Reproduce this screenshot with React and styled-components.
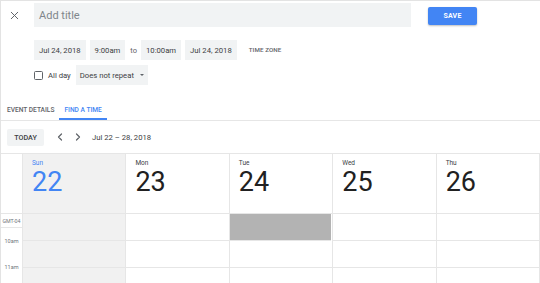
import React from 'react';
import styled, { createGlobalStyle } from 'styled-components';
import { X, ChevronLeft, ChevronRight } from 'lucide-react';

const GlobalStyle = createGlobalStyle`
  html, body {
    margin:0;
    padding:0;
    background:#ffffff;
  }
  body {
    font-family:Roboto, "Liberation Sans", sans-serif;
    color:#3c4043;
    overflow:hidden;
  }
`

const chipGray = '#f1f3f4'
const lineGray = '#e6e6e6'
const blue = '#4285f4'

const Page = styled.div`
  width:539px;
  height:282px;
  border-top:1px solid #e3e3e3;
  border-left:1px solid #e3e3e3;
  display:flex;
  flex-direction:column;
  overflow:hidden;
  & > * {
    flex-shrink:0;
  }
`

const TopBar = styled.div`
  display:flex;
  align-items:flex-start;
  padding-top:2px;
`

const CloseBox = styled.div`
  width:27px;
  height:24px;
  display:flex;
  align-items:center;
  justify-content:center;
  margin-right:6px;
  color:#5f6368;
`

const TitleInput = styled.div`
  width:370px;
  height:24px;
  background:${chipGray};
  display:flex;
  align-items:center;
  padding-left:5px;
  padding-right:2px;
  font-size:11px;
  color:#80868b;
`

const SaveButton = styled.div`
  margin-left:17px;
  margin-top:4px;
  width:49px;
  height:18px;
  background:${blue};
  border-radius:2px;
  box-shadow:0 1px 2px rgba(0,0,0,0.25);
  color:#ffffff;
  font-size:7px;
  font-weight:700;
  letter-spacing:0.2px;
  display:flex;
  align-items:center;
  justify-content:center;
`

const Row = styled.div`
  display:flex;
  align-items:center;
  height:20px;
  padding-left:33px;
  margin-top:${({ top }) => top}px;
`

const Chip = styled.div`
  height:20px;
  display:flex;
  align-items:center;
  padding:0 ${({ pad }) => pad || 5}px;
  margin-right:${({ gap }) => gap === undefined ? 4 : gap}px;
  background:${chipGray};
  font-size:7.7px;
  color:#3c4043;
  white-space:nowrap;
`

const Small = styled.span`
  font-size:${({ size }) => size || 7.5}px;
  color:${({ dark }) => dark ? '#3c4043' : '#5f6368'};
  margin:${({ margin }) => margin || '0'};
  white-space:nowrap;
`

const TimeZone = styled.span`
  margin-left:12px;
  font-size:6.2px;
  font-weight:500;
  color:#5f6368;
  letter-spacing:0.1px;
`

const Checkbox = styled.div`
  width:7px;
  height:7px;
  border:1.5px solid #5f6368;
  border-radius:1.5px;
`

const Caret = styled.span`
  margin-left:6px;
  width:0;
  height:0;
  border-left:2px solid transparent;
  border-right:2px solid transparent;
  border-top:2px solid #5f6368;
`

const TabBar = styled.div`
  display:flex;
  margin-top:15px;
  height:20px;
  padding-left:1px;
  border-bottom:1px solid ${lineGray};
`

const Tab = styled.div`
  height:20px;
  box-sizing:border-box;
  padding:0 5px;
  display:flex;
  align-items:center;
  font-size:6.6px;
  font-weight:500;
  color:${({ active }) => active ? blue : '#5f6368'};
  border-bottom:2px solid ${({ active }) => active ? blue : 'transparent'};
  padding-top:2px;
  white-space:nowrap;
`

const Toolbar = styled.div`
  height:32px;
  display:flex;
  align-items:center;
  padding-left:6px;
`

const TodayButton = styled.div`
  height:17px;
  width:37px;
  background:${chipGray};
  border-radius:2px;
  display:flex;
  align-items:center;
  justify-content:center;
  font-size:7.2px;
  font-weight:500;
  color:#3c4043;
`

const NavIcon = styled.div`
  width:18px;
  display:flex;
  justify-content:center;
  color:#5f6368;
  margin-left:${({ left }) => left}px;
`

const RangeLabel = styled.span`
  margin-left:5px;
  font-size:7.7px;
  color:#3c4043;
`

const Grid = styled.div`
  flex:1 1 auto !important;
  min-height:0;
  display:flex;
  border-top:1px solid ${lineGray};
`

const Gutter = styled.div`
  width:21px;
  border-right:1px solid ${lineGray};
  display:flex;
  flex-direction:column;
`

const GutterHead = styled.div`
  height:59px;
  flex-shrink:0;
  border-bottom:1px solid ${lineGray};
`

const GutterZone = styled.div`
  height:13px;
  flex-shrink:0;
  border-bottom:1px solid ${lineGray};
  display:flex;
  align-items:center;
  justify-content:center;
  font-size:5.3px;
  color:#70757a;
`

const GutterLabel = styled.div`
  height:26px;
  flex-shrink:0;
  display:flex;
  align-items:center;
  justify-content:center;
  font-size:5.5px;
  color:#70757a;
`

const DayColumn = styled.div`
  flex:1;
  display:flex;
  flex-direction:column;
  background:${({ shaded }) => shaded ? '#f1f1f1' : '#ffffff'};
  border-right:1px solid ${lineGray};
`

const DayHeader = styled.div`
  height:59px;
  flex-shrink:0;
  border-bottom:1px solid ${lineGray};
  padding-left:9px;
  display:flex;
  flex-direction:column;
  color:${({ today }) => today ? blue : '#3c4043'};
`

const DayName = styled.div`
  margin-top:5px;
  font-size:6.5px;
  line-height:8px;
`

const DayNumber = styled.div`
  font-size:27px;
  line-height:28px;
  margin-top:1px;
  color:${({ today }) => today ? blue : '#212121'};
`

const Slot = styled.div`
  height:26px;
  flex-shrink:0;
  border-bottom:1px solid ${lineGray};
  background:${({ busy }) => busy ? '#b3b3b3' : 'transparent'};
  margin-right:${({ busy }) => busy ? 1 : 0}px;
`

const days = [
  { name: 'Sun', num: 22, today: true },
  { name: 'Mon', num: 23 },
  { name: 'Tue', num: 24, busy: true },
  { name: 'Wed', num: 25 },
  { name: 'Thu', num: 26 },
]

export default function App() {
  return (
    <Page>
      <GlobalStyle />
      <TopBar>
        <CloseBox><X size={13} strokeWidth={1.8} /></CloseBox>
        <TitleInput>Add title</TitleInput>
        <SaveButton>SAVE</SaveButton>
      </TopBar>

      <Row top={13}>
        <Chip>Jul 24, 2018</Chip>
        <Chip gap={0}>9:00am</Chip>
        <Small margin="0 4px 0 5px">to</Small>
        <Chip>10:00am</Chip>
        <Chip gap={0}>Jul 24, 2018</Chip>
        <TimeZone>TIME ZONE</TimeZone>
      </Row>

      <Row top={5}>
        <Checkbox />
        <Small dark size={7.7} margin="0 5px 0 5px">All day</Small>
        <Chip pad={4}>Does not repeat<Caret /></Chip>
      </Row>

      <TabBar>
        <Tab>EVENT DETAILS</Tab>
        <Tab active>FIND A TIME</Tab>
      </TabBar>

      <Toolbar>
        <TodayButton>TODAY</TodayButton>
        <NavIcon left={7}><ChevronLeft size={12} strokeWidth={2.4} /></NavIcon>
        <NavIcon left={0}><ChevronRight size={12} strokeWidth={2.4} /></NavIcon>
        <RangeLabel>Jul 22 – 28, 2018</RangeLabel>
      </Toolbar>

      <Grid>
        <Gutter>
          <GutterHead />
          <GutterZone>GMT-04</GutterZone>
          <GutterLabel>10am</GutterLabel>
          <GutterLabel>11am</GutterLabel>
        </Gutter>
        {days.map(d => (
          <DayColumn key={d.name} shaded={d.today}>
            <DayHeader today={d.today}>
              <DayName>{d.name}</DayName>
              <DayNumber today={d.today}>{d.num}</DayNumber>
            </DayHeader>
            <Slot busy={d.busy} />
            <Slot />
            <Slot />
          </DayColumn>
        ))}
      </Grid>
    </Page>
  );
}
